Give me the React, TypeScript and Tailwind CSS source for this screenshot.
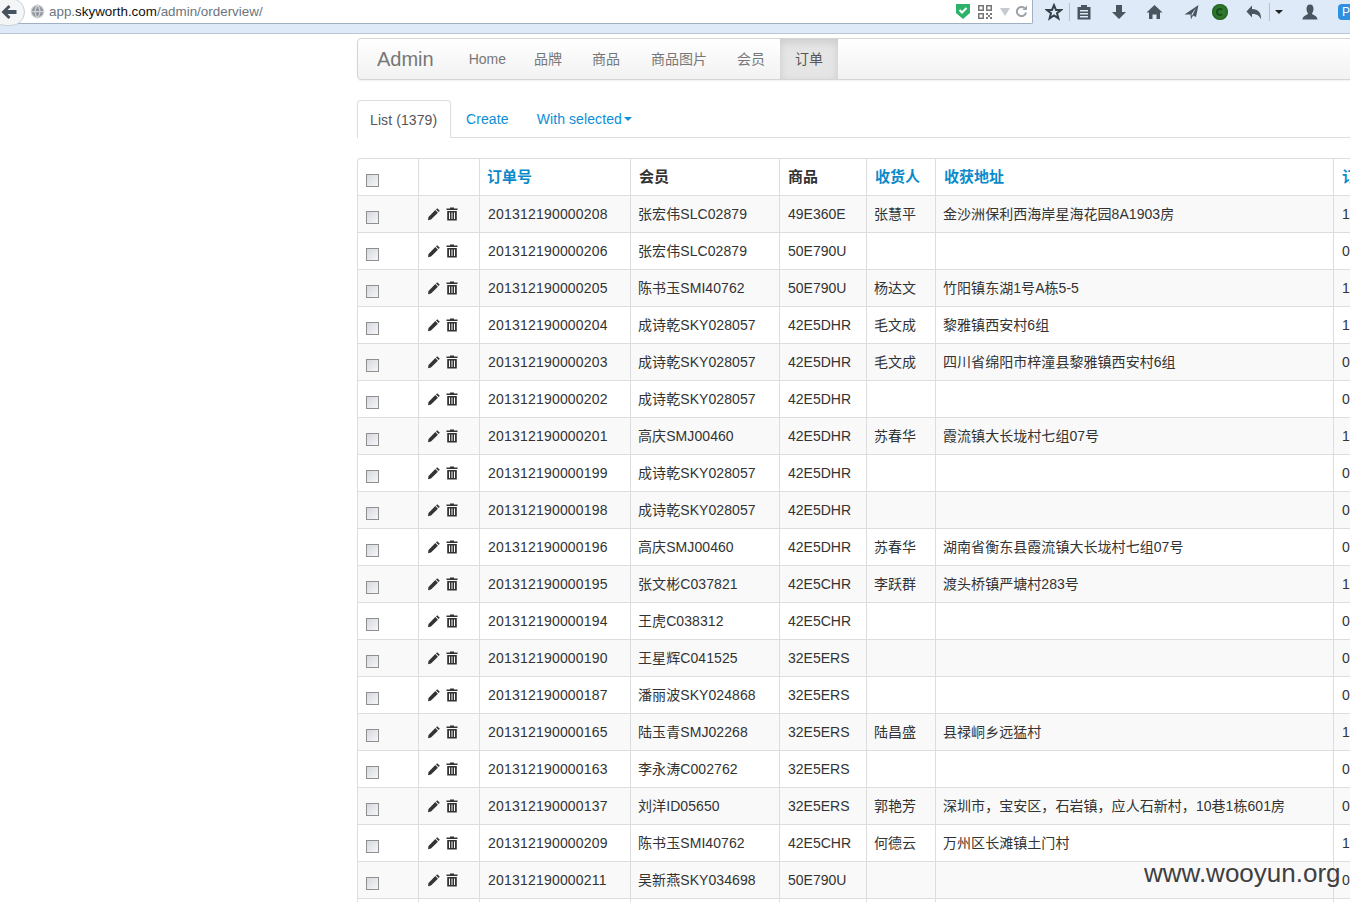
import { Globe } from 'lucide-react';

const font = 'font-["Liberation_Sans","Noto_Sans_CJK_SC",sans-serif]';

const rows = [
  ['201312190000208', '张宏伟SLC02879', '49E360E', '张慧平', '金沙洲保利西海岸星海花园8A1903房', '1'],
  ['201312190000206', '张宏伟SLC02879', '50E790U', '', '', '0'],
  ['201312190000205', '陈书玉SMI40762', '50E790U', '杨达文', '竹阳镇东湖1号A栋5-5', '1'],
  ['201312190000204', '成诗乾SKY028057', '42E5DHR', '毛文成', '黎雅镇西安村6组', '1'],
  ['201312190000203', '成诗乾SKY028057', '42E5DHR', '毛文成', '四川省绵阳市梓潼县黎雅镇西安村6组', '0'],
  ['201312190000202', '成诗乾SKY028057', '42E5DHR', '', '', '0'],
  ['201312190000201', '高庆SMJ00460', '42E5DHR', '苏春华', '霞流镇大长垅村七组07号', '1'],
  ['201312190000199', '成诗乾SKY028057', '42E5DHR', '', '', '0'],
  ['201312190000198', '成诗乾SKY028057', '42E5DHR', '', '', '0'],
  ['201312190000196', '高庆SMJ00460', '42E5DHR', '苏春华', '湖南省衡东县霞流镇大长垅村七组07号', '0'],
  ['201312190000195', '张文彬C037821', '42E5CHR', '李跃群', '渡头桥镇严塘村283号', '1'],
  ['201312190000194', '王虎C038312', '42E5CHR', '', '', '0'],
  ['201312190000190', '王星辉C041525', '32E5ERS', '', '', '0'],
  ['201312190000187', '潘丽波SKY024868', '32E5ERS', '', '', '0'],
  ['201312190000165', '陆玉青SMJ02268', '32E5ERS', '陆昌盛', '县禄峒乡远猛村', '1'],
  ['201312190000163', '李永涛C002762', '32E5ERS', '', '', '0'],
  ['201312190000137', '刘洋ID05650', '32E5ERS', '郭艳芳', '深圳市，宝安区，石岩镇，应人石新村，10巷1栋601房', '0'],
  ['201312190000209', '陈书玉SMI40762', '42E5CHR', '何德云', '万州区长滩镇土门村', '1'],
  ['201312190000211', '吴新燕SKY034698', '50E790U', '', '', '0'],
  ['', '', '', '', '', ''],
];

// per-column tweaks, the digits in the shot are a bit wider than ours
const cellText = [
  'tracking-[0.2px]',
  '-ml-px tracking-[0.08px]',
  '',
  '-ml-px',
  '-ml-px tracking-[0.05px]',
  '',
];

function Check() {
  return (
    <input
      type="checkbox"
      className="m-0 block h-[13px] w-[13px] appearance-none border border-[#8f8f8f] bg-gradient-to-br from-[#d5d8de] to-[#f7f7f9]"
    />
  );
}

function Pencil() {
  return (
    <svg width="14" height="14" viewBox="0 0 14 14" className="fill-[#333]">
      <path d="M10.2 1.2 12.8 3.8 11.6 5 9 2.4Z" />
      <path d="M8.3 3.1 10.9 5.7 4 12.6 1 13.2 1.5 10Z" />
    </svg>
  );
}

function Trash() {
  return (
    <svg width="12" height="14" viewBox="0 0 12 14" className="fill-[#333]">
      <path d="M4 0.5H8V1.5H11.5V3H0.5V1.5H4Z" />
      <path d="M1.2 4H10.8V13.5H1.2ZM3 5.5V12H4V5.5ZM5.5 5.5V12H6.5V5.5ZM8 5.5V12H9V5.5Z" fillRule="evenodd" />
    </svg>
  );
}

function Toolbar() {
  const c = 'fill-[#4a5560]';
  return (
    <div className="flex h-[24px] items-center">
      <svg width="18" height="18" viewBox="0 0 18 18" className="ml-[12px] fill-none stroke-[#37404a] stroke-[2]">
        <path d="M9 2.2 11 7H16L12 10.2 13.4 15.4 9 12.4 4.6 15.4 6 10.2 2 7H7Z" />
      </svg>
      <div className="ml-[6px] h-[18px] w-px bg-[#b4c0cc]" />
      <svg width="16" height="16" viewBox="0 0 16 16" className={`ml-[6px] ${c}`}>
        <path d="M5 1H11V3H14.5V15.5H1.5V3H5ZM4 6V7.5H12V6ZM4 9V10.5H12V9ZM4 12V13.5H12V12Z" fillRule="evenodd" />
      </svg>
      <svg width="16" height="16" viewBox="0 0 16 16" className={`ml-[19px] ${c}`}>
        <path d="M5 1H11V8H15L8 15 1 8H5Z" />
      </svg>
      <svg width="17" height="16" viewBox="0 0 17 16" className={`ml-[19px] ${c}`}>
        <path d="M8.5 1 16.5 8.5H14V15H10.5V10.5H6.5V15H3V8.5H.5Z" />
      </svg>
      <svg width="15" height="16" viewBox="0 0 15 16" className={`ml-[21px] ${c}`}>
        <path d="M14.5 1 12 13 9 11.500 7 15.500 6.500 10.500 .5 10.500ZM12 4 7.500 10 7.800 12 9 10Z" fillRule="evenodd" />
      </svg>
      <div className="ml-[13px] flex h-4 w-4 items-center justify-center rounded-full bg-[#2e7a2e] shadow-[inset_0_0_3px_#123f12]">
        <div className="h-2 w-2 rounded-full border-2 border-[#1a4d1a] border-r-transparent" />
      </div>
      <svg width="16" height="15" viewBox="0 0 16 15" className={`ml-[18px] ${c}`}>
        <path d="M6 .5V4C12 4 15.5 7.5 15 14.5 13.500 10.500 11 9 6 9V12.500L.5 6.500Z" />
      </svg>
      <div className="ml-[7px] h-[18px] w-px bg-[#b4c0cc]" />
      <div className="ml-[5px] h-0 w-0 border-x-[4px] border-t-[4px] border-x-transparent border-t-[#222]" />
      <svg width="16" height="16" viewBox="0 0 16 16" className={`ml-[19px] ${c}`}>
        <path d="M8 .5C10.5.5 11.5 2.5 11.5 5 11.5 7 10.5 8.5 10 9.5 10 11 15.5 11.5 15.5 15.5H.5C.5 11.5 6 11 6 9.5 5.500 8.500 4.500 7 4.500 5 4.500 2.500 5.500.5 8 .5Z" />
      </svg>
      <div className="ml-[20px] flex h-4 w-4 shrink-0 items-center justify-center rounded-sm bg-[#2f8fe0] text-[12px] leading-none text-white">P</div>
    </div>
  );
}

export default function App() {
  const th = 'border-r border-b border-[#ddd] px-2 align-top pt-[8px] text-left text-[15px] font-bold leading-[20px]';
  const td = 'border-r border-b border-[#ddd] px-2 align-top pt-[8px] text-[14px] leading-[20px]';
  const link = 'text-[#0a8acb]';

  return (
    <div className={`relative h-[902px] w-[1350px] overflow-hidden bg-white text-[#333] ${font}`}>
      <div className="flex h-[34px] items-start border-b border-[#b9c6d3] bg-[#deeaf7]">
        <div className="flex h-[24px] w-[1033px] shrink-0 items-center rounded-br-[2px] border-r border-b border-[#9fb0c1] bg-white">
          <div className="ml-[-9px] flex h-[28px] w-[34px] shrink-0 items-center justify-end rounded-full border border-[#c8d0d8] bg-[#f3f5f7] pr-[7px]">
            <svg width="16" height="14" viewBox="0 0 16 14" className="fill-[#46525e]">
              <path d="M7.500 0 9.500 2 6.500 5H15.500V9H6.500L9.500 12 7.500 14 .5 7Z" />
            </svg>
          </div>
          <Globe size={15} className="ml-[5px] shrink-0 fill-[#8f959b] stroke-[#d0d3d6]" />
          <div className="ml-[4px] pt-[2px] text-[13.400px] text-[#6b7580]">
            app.<span className="text-[#111]">skyworth.com</span>/admin/orderview/
          </div>
          <div className="ml-auto flex items-center pr-[4px]">
            <svg width="14" height="15" viewBox="0 0 14 15">
              <path d="M0 0H14V9L7 15 0 9Z" className="fill-[#2cb36b]" />
              <path d="M3.500 6 6 8.500 10.500 4" className="fill-none stroke-white stroke-[2]" />
            </svg>
            <svg width="14" height="14" viewBox="0 0 14 14" className="ml-[8px] fill-[#777]">
              <path d="M0 0H6V6H0ZM1.500 1.500V4.500H4.500V1.500ZM8 0H14V6H8ZM9.500 1.500V4.500H12.500V1.500ZM0 8H6V14H0ZM1.500 9.500V12.500H4.500V9.500ZM8 8H10V10H8ZM12 8H14V10H12ZM10 10H12V12H10ZM8 12H10V14H8ZM12 12H14V14H12Z" fillRule="evenodd" />
            </svg>
            <div className="ml-[8px] h-0 w-0 border-x-[5px] border-t-[8px] border-x-transparent border-t-[#c5cbd1]" />
            <svg width="13" height="13" viewBox="0 0 13 13" className="ml-[5px] fill-none stroke-[#9aa2aa] stroke-[2]">
              <path d="M11 7.500A4.600 4.600 0 1 1 9.500 3" />
              <path d="M12 .5V5H7.500Z" className="fill-[#9aa2aa] stroke-none" />
            </svg>
          </div>
        </div>
        <Toolbar />
      </div>

      <div className="ml-[357px] mt-[4px] w-[1100px]">
        <div className="flex h-[42px] items-stretch rounded-[4px] border border-[#d5d5d5] bg-gradient-to-b from-white to-[#f2f2f2] shadow-[0_1px_2px_rgba(0,0,0,0.06)]">
          <span className="ml-[19px] self-center text-[20px] leading-[20px] text-[#777]">Admin</span>
          <div className="ml-[20px] flex text-[14px] text-[#777]">
            <a className="flex items-center pl-[15px] pr-[13px]">Home</a>
            <a className="flex items-center px-[15px]">品牌</a>
            <a className="flex items-center pl-[15px] pr-[16px]">商品</a>
            <a className="flex items-center px-[15px]">商品图片</a>
            <a className="flex items-center px-[15px]">会员</a>
            <a className="flex items-center bg-[#e5e5e5] px-[15px] text-[#555] shadow-[inset_0_3px_8px_rgba(0,0,0,0.12)]">订单</a>
          </div>
        </div>

        <div className="mt-[20px] flex h-[38px] border-b border-[#ddd] pt-px text-[14px] tracking-[0.1px]">
          <a className="z-10 -mt-px flex h-[38px] w-[94px] items-center rounded-t-[4px] border border-b-0 border-[#ddd] bg-white px-3 pt-[2px] text-[#555]">List (1379)</a>
          <a className="ml-[3px] flex items-center px-3 text-[#0a8fd8]">Create</a>
          <a className="ml-[4px] flex items-center px-3 text-[#0a8fd8]">
            With selected
            <span className="ml-[2px] h-0 w-0 border-x-[4px] border-t-[4px] border-x-transparent border-t-[#0a8fd8]" />
          </a>
        </div>

        <table className="mt-[20px] w-[1100px] table-fixed border-separate border-spacing-0 rounded-tl-[4px] border-l border-t border-[#ddd]">
          <colgroup>
            <col className="w-[61px]" />
            <col className="w-[61px]" />
            <col className="w-[151px]" />
            <col className="w-[149px]" />
            <col className="w-[87px]" />
            <col className="w-[69px]" />
            <col className="w-[398px]" />
            <col />
          </colgroup>
          <thead>
            <tr className="h-[37px]">
              <th className={th}><div className="mt-[7px]"><Check /></div></th>
              <th className={th} />
              <th className={`${th} ${link}`}><div className="-ml-px">订单号</div></th>
              <th className={th}>会员</th>
              <th className={th}>商品</th>
              <th className={`${th} ${link}`}>收货人</th>
              <th className={`${th} ${link}`}>收获地址</th>
              <th className={`${th} ${link}`}>订单状态</th>
            </tr>
          </thead>
          <tbody>
            {rows.map((r, i) => (
              <tr key={i} className={`h-[37px] ${i % 2 === 0 ? 'bg-[#f9f9f9]' : 'bg-white'}`}>
                <td className={td}><div className="mt-[7px]"><Check /></div></td>
                <td className={td}>
                  <div className="mt-[3px] flex items-center gap-[5px]"><Pencil /><Trash /></div>
                </td>
                {r.map((v, j) => (
                  <td key={j} className={`${td} whitespace-nowrap`}>
                    <div className={cellText[j]}>{v}</div>
                  </td>
                ))}
              </tr>
            ))}
          </tbody>
        </table>
      </div>

      <div className="absolute left-[1144px] top-[858px] text-[26px] leading-[30px] text-[#3f3f3f]">www.wooyun.org</div>
    </div>
  );
}
